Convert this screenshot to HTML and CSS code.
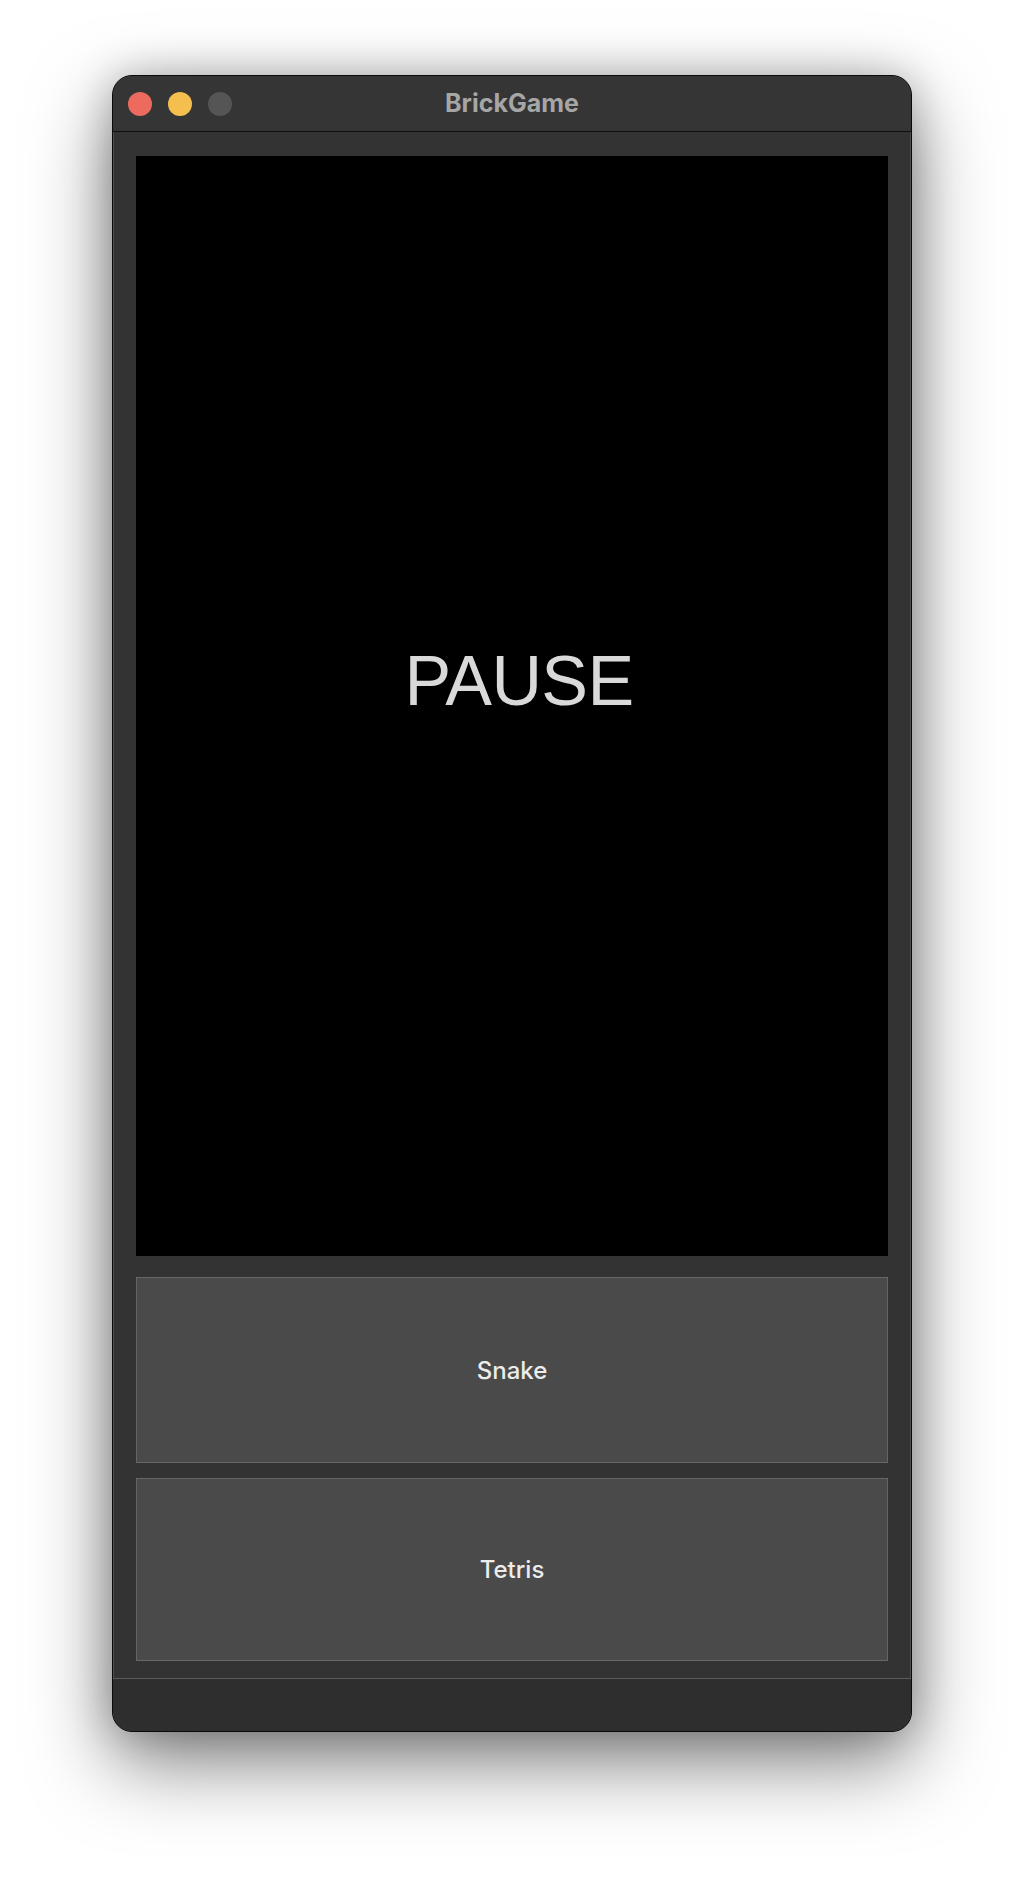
FILE: index.html
```html
<!DOCTYPE html>
<html>
<head>
<meta charset="utf-8">
<title>BrickGame</title>
<link rel="stylesheet" href="styles.css">
</head>
<body>
<div class="window">
  <div class="titlebar">
    <div class="lights">
      <span class="light red"></span>
      <span class="light yellow"></span>
      <span class="light gray"></span>
    </div>
    <div class="title">BrickGame</div>
  </div>
  <div class="content">
    <div class="screen">
      <div class="pause">PAUSE</div>
    </div>
    <button class="btn snake">Snake</button>
    <button class="btn tetris">Tetris</button>
  </div>
  <div class="statusbar"></div>
</div>
</body>
</html>
```
FILE: styles.css
```css
html, body {
  margin: 0;
  padding: 0;
  background: #ffffff;
}
body {
  width: 1024px;
  height: 1880px;
  overflow: hidden;
}
.window {
  box-sizing: border-box;
  margin: 75px 0 0 112px;
  width: 800px;
  height: 1657px;
  border: 1px solid #0a0a0a;
  border-radius: 20px;
  background: #333333;
  box-shadow: inset 0 0 0 1px rgba(255,255,255,0.14), 0 30px 80px rgba(0,0,0,0.5), 0 0 40px rgba(0,0,0,0.22);
  display: flex;
  flex-direction: column;
  overflow: hidden;
}
.titlebar {
  position: relative;
  height: 55px;
  flex: none;
  border-bottom: 1px solid #0e0e0e;
  background: #353535;
  display: flex;
  align-items: center;
  justify-content: center;
}
.lights {
  position: absolute;
  left: 15px;
  top: 16px;
  display: flex;
  gap: 16px;
}
.light {
  width: 24px;
  height: 24px;
  border-radius: 50%;
  display: block;
}
.red { background: #ed6a5e; }
.yellow { background: #f5bf4f; }
.gray { background: #555555; }
.title {
  font-family: Inter, "Liberation Sans", sans-serif;
  font-weight: 700;
  font-size: 25px;
  color: #a6a6a6;
  margin-top: -2px;
}
.content {
  flex: none;
  padding: 24px 23px 17px 23px;
  display: flex;
  flex-direction: column;
}
.screen {
  height: 1100px;
  background: #000000;
  display: flex;
  justify-content: center;
  padding-top: 485px;
  box-sizing: border-box;
}
.pause {
  font-family: "Liberation Sans", Arial, sans-serif;
  font-size: 70px;
  letter-spacing: -0.6px;
  color: #d9d9d9;
  line-height: 80px;
  height: 80px;
  padding-left: 14px;
}
.btn {
  box-sizing: border-box;
  display: flex;
  align-items: center;
  justify-content: center;
  width: 100%;
  margin: 0;
  background: #4a4a4a;
  border: 1px solid #666666;
  color: #ececec;
  font-family: Inter, "Liberation Sans", sans-serif;
  font-size: 24px;
  font-weight: 500;
  padding: 0;
}
.snake {
  height: 186px;
  margin-top: 21px;
}
.tetris {
  height: 183px;
  margin-top: 15px;
}
.statusbar {
  flex: 1;
  border-top: 1px solid #5c5c5c;
  background: #2e2e2e;
}
```
